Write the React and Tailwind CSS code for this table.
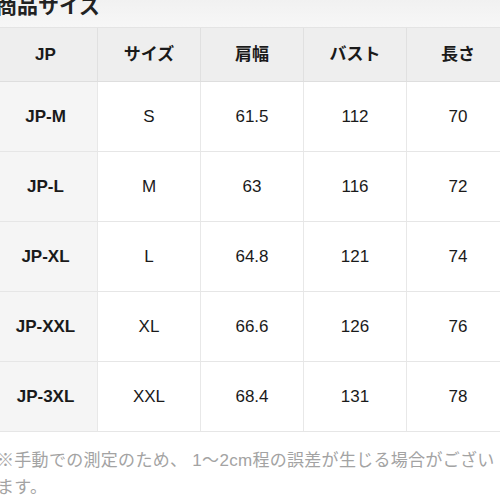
const font = { fontFamily: '"Liberation Sans", "Noto Sans CJK JP", sans-serif' };

const headers = ["JP", "サイズ", "肩幅", "バスト", "長さ"];

const rows = [
  ["JP-M", "S", "61.5", "112", "70"],
  ["JP-L", "M", "63", "116", "72"],
  ["JP-XL", "L", "64.8", "121", "74"],
  ["JP-XXL", "XL", "66.6", "126", "76"],
  ["JP-3XL", "XXL", "68.4", "131", "78"],
];

export default function App() {
  return (
    <div
      className="w-[500px] h-[500px] overflow-hidden bg-white flex flex-col text-[#1a1a1a]"
      style={font}
    >
      {/* title */}
      <div className="h-[28px] shrink-0 bg-gradient-to-b from-[#f1f1f1] to-[#f7f7f7] border-b border-[#e4e4e4]">
        <div className="-mt-[5px] -ml-[4px] text-[21px] leading-[21px] font-bold text-[#222]">
          商品サイズ
        </div>
      </div>

      {/* table */}
      <div className="-ml-[6px] w-[515px] shrink-0">
        <div className="grid grid-cols-[103px_103px_103px_103px_103px] h-[54px] bg-[#eeeeee] border-b border-[#dedede]">
          {headers.map((h, i) => (
            <div
              key={h}
              className={
                "flex items-center justify-center text-[17px] font-bold " +
                (i > 0 ? "border-l border-[#e0e0e0]" : "")
              }
            >
              {h}
            </div>
          ))}
        </div>
        {rows.map((r) => (
          <div
            key={r[0]}
            className="grid grid-cols-[103px_103px_103px_103px_103px] h-[70px] border-b border-[#e6e6e6]"
          >
            {r.map((c, i) => (
              <div
                key={i}
                className={
                  "flex items-center justify-center text-[17px] " +
                  (i === 0
                    ? "font-bold bg-[#f5f5f5]"
                    : "bg-white border-l border-[#e8e8e8]")
                }
              >
                {c}
              </div>
            ))}
          </div>
        ))}
      </div>

      {/* note */}
      <div className="flex-1 pt-[15px] -ml-[3px] text-[17px] leading-[27px] tracking-[0.3px] text-[#a3a3a3] whitespace-nowrap">
        ※手動での測定のため、 1〜2cm程の誤差が生じる場合がござい
        <br />
        ます。
      </div>
      <div className="h-[3px] shrink-0 bg-black" />
    </div>
  );
}
